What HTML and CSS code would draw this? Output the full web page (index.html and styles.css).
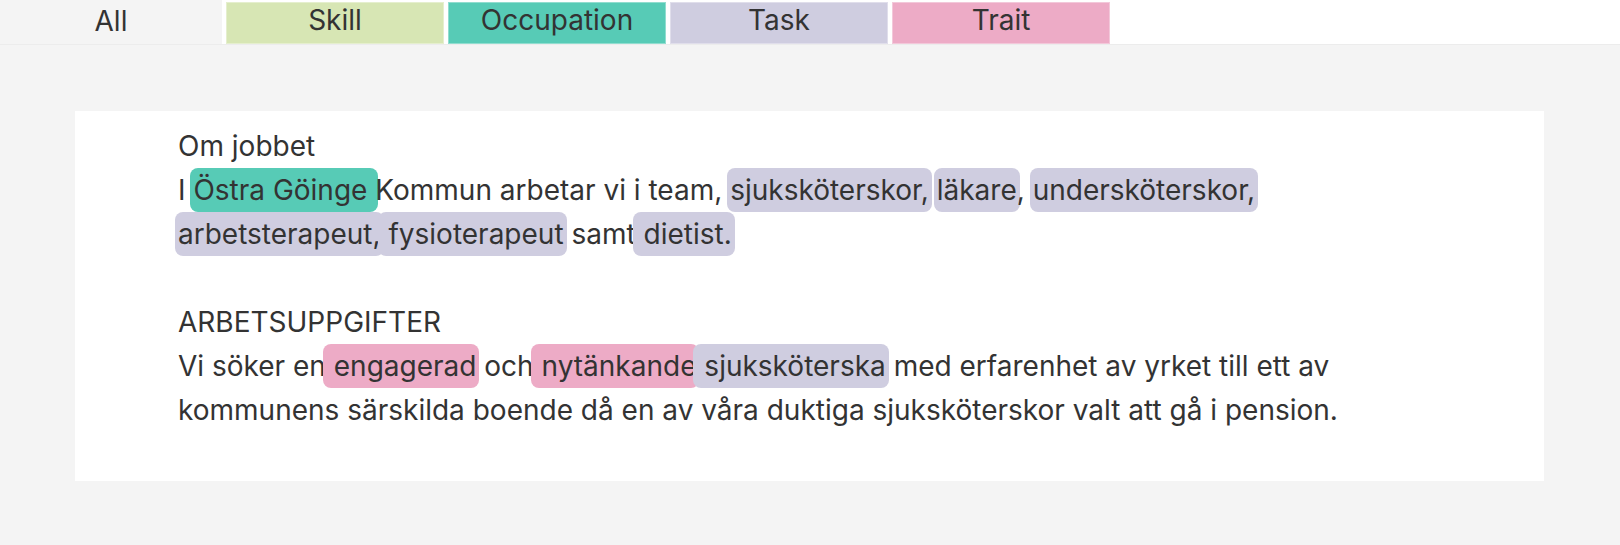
FILE: index.html
```html
<!DOCTYPE html>
<html lang="sv">
<head>
    <meta charset="UTF-8">
    <meta name="viewport" content="width=device-width, initial-scale=1.0">
    <title>Annotering</title>
    <link rel="stylesheet" href="styles.css">
</head>
<body>
    <div class="tabs">
        <div class="tab tab-all">All</div>
        <div class="tab skill">Skill</div>
        <div class="tab occupation">Occupation</div>
        <div class="tab task">Task</div>
        <div class="tab trait">Trait</div>
    </div>
    <div class="card">
        <div class="text">Om jobbet
I <span class="tag occupation">Östra Göinge </span>Kommun arbetar vi i team, <span class="tag task">sjuksköterskor,</span> <span class="tag task">läkare</span>, <span class="tag task">undersköterskor,</span> <span class="tag task">arbetsterapeut,</span><span class="tag task"> fysioterapeut</span> samt<span class="tag task"> dietist.</span>

ARBETSUPPGIFTER
Vi söker en<span class="tag trait"> engagerad</span> och<span class="tag trait"> nytänkande</span><span class="tag task"> sjuksköterska</span> med erfarenhet av yrket till ett av kommunens särskilda boende då en av våra duktiga sjuksköterskor valt att gå i pension.</div>
    </div>
</body>
</html>
```

FILE: styles.css
```css
body, html {
    margin: 0;
    padding: 0;
    font-family: Inter, "Noto Sans", sans-serif;
    background-color: #f4f4f4;
    color: #333;
}

.tabs {
    display: flex;
    height: 44px;
    background-color: #fff;
    border-bottom: 1px solid #ececec;
}

.tab {
    width: 218px;
    height: 42px;
    margin: 2px 2px 0;
    font-size: 28px;
    line-height: 36px;
    text-align: center;
    box-shadow: inset 0 0 0 1px rgba(255, 255, 255, 0.35);
}

.tab-all {
    width: 222px;
    height: 44px;
    margin: 0 2px 0 0;
    line-height: 42px;
    background-color: #f4f4f4;
    box-shadow: none;
}

.skill {
    background-color: #d7e6b4;
}

.occupation {
    background-color: #57cbb6;
}

.task {
    background-color: #cfcde0;
}

.trait {
    background-color: #edabc6;
}

.card {
    margin: 66px 76px 0 75px;
    padding: 13px 103px 49px;
    background-color: #fff;
}

.text {
    max-width: 1200px;
    font-size: 28px;
    line-height: 44px;
    white-space: pre-line;
}

/* highlight sits behind the words without moving them */
.tag {
    margin: 0 -3px;
    padding: 5px 3px;
    border-radius: 8px;
}
```
